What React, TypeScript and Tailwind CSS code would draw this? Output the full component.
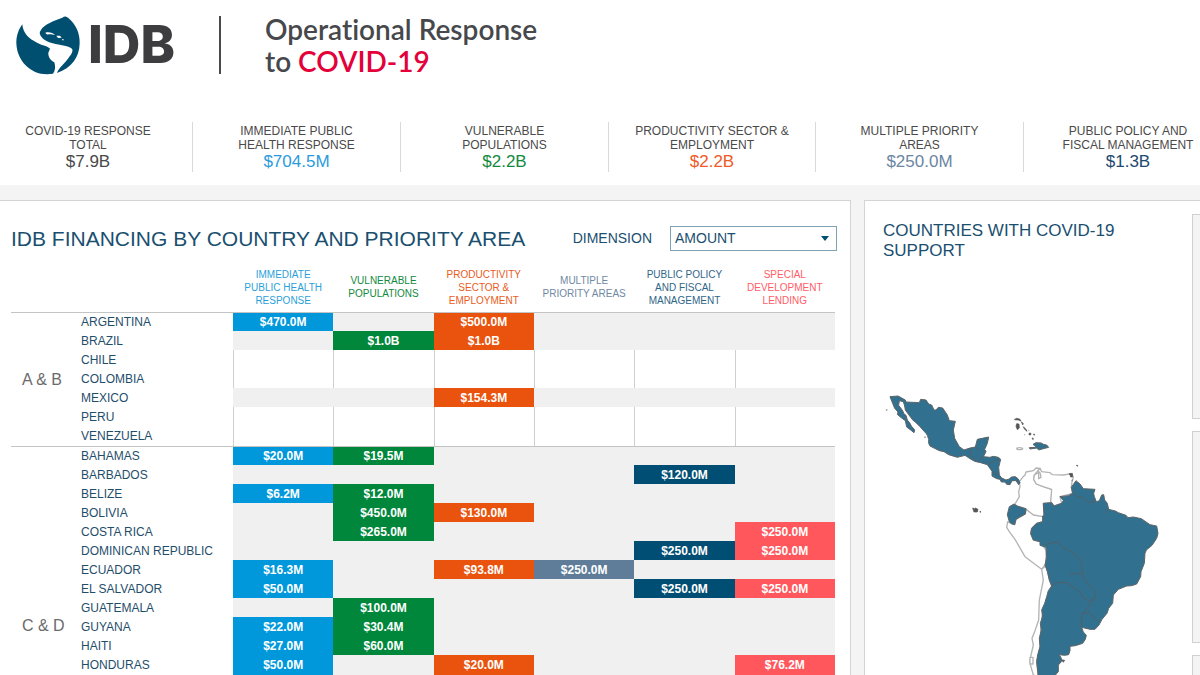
const totals = [
  { label: "COVID-19 RESPONSE\nTOTAL", value: "$7.9B", style: "pr-4 border-r text-[#4a4a4a]" },
  { label: "IMMEDIATE PUBLIC\nHEALTH RESPONSE", value: "$704.5M", style: "border-r text-[#2b9bdc]" },
  { label: "VULNERABLE\nPOPULATIONS", value: "$2.2B", style: "border-r text-[#128a3e]" },
  { label: "PRODUCTIVITY SECTOR &\nEMPLOYMENT", value: "$2.2B", style: "border-r text-[#f05a28]" },
  { label: "MULTIPLE PRIORITY\nAREAS", value: "$250.0M", style: "border-r text-[#6b86a3]" },
  { label: "PUBLIC POLICY AND\nFISCAL MANAGEMENT", value: "$1.3B", style: "pl-8 text-[#1d4a70]" },
];

const columns = [
  { name: "IMMEDIATE\nPUBLIC HEALTH\nRESPONSE", text: "text-[#2b9fd9]", fill: "bg-[#0098db]" },
  { name: "VULNERABLE\nPOPULATIONS", text: "text-[#128a3e]", fill: "bg-[#00873b]" },
  { name: "PRODUCTIVITY\nSECTOR &\nEMPLOYMENT", text: "text-[#ea5b1c]", fill: "bg-[#e9530e]" },
  { name: "MULTIPLE\nPRIORITY AREAS", text: "text-[#6f89a3]", fill: "bg-[#5f7d98]" },
  { name: "PUBLIC POLICY\nAND FISCAL\nMANAGEMENT", text: "text-[#2f6687]", fill: "bg-[#004e73]" },
  { name: "SPECIAL\nDEVELOPMENT\nLENDING", text: "text-[#ff5c66]", fill: "bg-[#ff575c]" },
];

// amounts are keyed by column index
type Row = { country: string; amounts: Record<number, string> };

const groups: { name: string; cell: string; rows: Row[] }[] = [
  {
    name: "A & B",
    cell: "align-middle",
    rows: [
      { country: "ARGENTINA", amounts: { 0: "$470.0M", 2: "$500.0M" } },
      { country: "BRAZIL", amounts: { 1: "$1.0B", 2: "$1.0B" } },
      { country: "CHILE", amounts: {} },
      { country: "COLOMBIA", amounts: {} },
      { country: "MEXICO", amounts: { 2: "$154.3M" } },
      { country: "PERU", amounts: {} },
      { country: "VENEZUELA", amounts: {} },
    ],
  },
  {
    name: "C & D",
    cell: "align-bottom pb-10",
    rows: [
      { country: "BAHAMAS", amounts: { 0: "$20.0M", 1: "$19.5M" } },
      { country: "BARBADOS", amounts: { 4: "$120.0M" } },
      { country: "BELIZE", amounts: { 0: "$6.2M", 1: "$12.0M" } },
      { country: "BOLIVIA", amounts: { 1: "$450.0M", 2: "$130.0M" } },
      { country: "COSTA RICA", amounts: { 1: "$265.0M", 5: "$250.0M" } },
      { country: "DOMINICAN REPUBLIC", amounts: { 4: "$250.0M", 5: "$250.0M" } },
      { country: "ECUADOR", amounts: { 0: "$16.3M", 2: "$93.8M", 3: "$250.0M" } },
      { country: "EL SALVADOR", amounts: { 0: "$50.0M", 4: "$250.0M", 5: "$250.0M" } },
      { country: "GUATEMALA", amounts: { 1: "$100.0M" } },
      { country: "GUYANA", amounts: { 0: "$22.0M", 1: "$30.4M" } },
      { country: "HAITI", amounts: { 0: "$27.0M", 1: "$60.0M" } },
      { country: "HONDURAS", amounts: { 0: "$50.0M", 2: "$20.0M", 5: "$76.2M" } },
    ],
  },
];

function Globe() {
  return (
    <svg className="w-16 h-[60px] shrink-0" viewBox="49 47 192 180" aria-hidden="true">
      <g fill="#004e70">
        <path d="M68 75C57 90 50 108 50 132C52 185 92 225 142 225L160 223C167 214 168 202 164 189C152 182 145 172 146 160L151 148C143 138 130 140 112 130C88 119 70 102 68 75Z" />
        <path d="M120 102C121 88 139 73 172 61L188 55Q198 47 206 56C229 76 241 101 240 132C239 175 216 206 172 221C178 205 192 196 206 177C211 168 220 162 218 150C209 139 190 139 168 134C144 129 125 121 120 102Z" />
      </g>
      <g fill="#fff">
        <path d="M137 100C147 96 161 101 166 107C158 107 154 104 148 105C143 106 139 104 137 100Z" />
        <path d="M170 109L181 109L186 115L175 116Z" />
        <path d="M187 120h5v3h-5z" />
      </g>
    </svg>
  );
}

function SupportMap() {
  return (
    <svg
      className="w-[320px] h-[295px] shrink-0"
      viewBox="0 0 960 885"
      role="img"
      aria-label="Map of Latin America and the Caribbean"
      strokeLinejoin="round"
    >
      {/* countries without support */}
      <g fill="#fff" stroke="#b4b4b4" strokeWidth="4">
        <path d="M448 305L458 292L465 285L468 276L490 272L498 264L510 265L493 285L491 298L499 312L520 320L545 328L545 345L542 368L520 370L522 405L520 425L500 413L486 403L468 388L440 378L435 372L448 350L446 335L450 320Z" />
        <path d="M510 265L515 275L540 278L547 284L580 285L605 281L610 292L606 306L604 322L608 340L570 350L575 370L552 378L542 365L545 328L520 320L499 312L491 298L493 285L506 277L506 296L513 292L511 280L504 272Z" />
        <path d="M468 388L490 405L520 410L518 425L500 430L485 445L482 455L490 480L510 485L528 510L528 550L515 568L465 530L435 478L418 455L410 442L413 425L424 431L434 434L438 418L466 402Z" />
        <path d="M515 568L520 600L512 640L508 660L506 720L495 752L486 775L490 795L482 830L480 850L490 885L505 890L500 845L510 800L512 750L518 690L535 650L545 618L538 600L530 555Z" />
        <ellipse cx="449" cy="206" rx="9" ry="3" />
        <path d="M480 832h9v20h-9z" />
      </g>
      {/* countries with support */}
      <g fill="#31718f" stroke="#5d6467" strokeWidth="3">
        <path d="M60 50L84 48L106 60L108 66L148 68L152 58L168 60L176 72L185 75L192 90L198 90L205 82L218 84L232 105L238 122L256 124L250 150L254 175L268 200L282 210L300 204L316 201L322 178L356 171L352 190L344 208L348 215L340 230L360 232L370 229L385 232L392 238L386 262L388 285L395 294L408 300L418 297L424 291L436 290L445 297L450 308L446 314L438 302L426 302L420 314L410 313L405 306L394 306L390 298L380 296L366 288L366 274L352 254L332 248L314 244L300 236L285 226L262 232L236 224L222 215L208 212L180 198L176 190L176 178L172 166L168 160L150 140L135 125L130 122L122 112L106 90L104 78L100 65L88 62L86 76L98 92L102 102L108 106L112 120L120 130L124 138L134 150L132 158L122 150L110 141L106 122L92 112L82 103L84 96L74 85Z" />
        <path d="M432 372L441 378L468 386L466 402L448 412L438 418L434 434L424 431L418 425L412 404L418 380Z" />
        <path d="M478 203L500 202L489 193L498 188L514 189L520 193L530 195L536 202L520 206L506 210L501 204L480 207Z" />
        <path d="M618 302L630 312L640 326L675 328L671 340L673 350L679 365L688 362L695 345L701 344L704 360L712 370L716 388L724 390L736 393L745 398L768 406L774 413L790 411L814 416L840 434L860 438L864 460L860 475L846 496L829 510L825 520L823 550L813 575L812 590L800 612L785 617L770 618L745 628L730 645L728 670L716 685L711 700L696 718L687 735L675 748L660 748L635 742L640 756L649 766L646 778L638 790L616 797L600 799L600 812L596 824L584 826L568 824L574 835L574 845L565 855L565 875L550 892L505 892L500 845L503 825L510 800L508 775L514 750L511 730L518 708L515 690L524 670L530 650L535 632L545 618L538 600L532 575L525 555L530 530L528 502L510 496L510 485L490 480L482 462L485 445L500 430L518 425L518 408L522 405L520 370L545 368L552 378L575 370L580 361L570 350L595 347L608 340L604 322Z" />
      </g>
      {/* inner borders */}
      <g fill="none" stroke="#516069" strokeWidth="3">
        <path d="M525 495L540 490L565 485L575 500L595 512L612 520L624 530L633 548L638 580L644 600L655 612L672 632L677 650L670 662L654 682L638 700L634 720L635 742" />
        <path d="M545 618L560 607L590 608L610 622L630 635L642 655L658 663L672 656M600 582L636 580M638 700L660 698L675 716L686 726" />
        <path d="M608 340L622 350L640 354L655 368L676 364M716 388L704 400" />
        <path d="M300 204L304 228L324 246M340 230L328 236M354 254L366 246L388 236M366 274L386 285M316 201L330 212" />
      </g>
      {/* small islands */}
      <g fill="#555" stroke="#555" strokeWidth="2">
        <path d="M433 119l6-4 10 2 4 6-8-3zM440 131l7 1 1 12-6 5-4-10zM454 125l6 6-2 4zM460 140l8 8 3 6-8-7zM477 160l5-1 1 5-6 1zM490 162l4 1-1 3zM486 174l4 1-1 4z" />
        <path d="M308 384l6 2 2-2 8 4-2 8-10 0-2-5zM330 393l3 3-3 1z" />
        <path d="M597 281l10-1 1 11-6 0-2-6zM619 256l4 0 0 3zM604 301l5-1M574 839l10 2-4 6z" />
      </g>
      <g fill="#b0b0b0">
        <circle cx="50" cy="90" r="3" />
        <circle cx="165" cy="172" r="3" />
        <circle cx="476" cy="151" r="2" />
        <circle cx="464" cy="164" r="2" />
      </g>
    </svg>
  );
}

function FinancingTable() {
  return (
    <table className="w-full table-fixed border-separate border-spacing-0 text-[12px] leading-[18px]">
      <colgroup>
        <col className="w-[70px]" />
        <col className="w-[152px]" />
        {columns.map((c) => (
          <col key={c.name} />
        ))}
      </colgroup>
      <thead>
        <tr>
          <td />
          <td />
          {columns.map((c) => (
            <th
              key={c.name}
              scope="col"
              className={`h-[50px] p-0 align-middle font-normal text-[10px] leading-[13px] whitespace-pre-line ${c.text}`}
            >
              {c.name}
            </th>
          ))}
        </tr>
      </thead>
      {groups.map((group) => (
        <tbody key={group.name}>
          {group.rows.map((row, i) => {
            const last = i === group.rows.length - 1;
            const line = i === 0 ? "border-t border-t-[#c4c4c4] h-[19px]" : last ? "h-5" : "h-[19px]";
            const empty = Object.keys(row.amounts).length === 0;
            return (
              <tr key={row.country}>
                {i === 0 && (
                  <th
                    scope="rowgroup"
                    rowSpan={group.rows.length}
                    className={`border-t border-t-[#c4c4c4] p-0 pl-[11px] text-left text-[16px] font-normal text-[#6b6b6b] ${group.cell}`}
                  >
                    {group.name}
                  </th>
                )}
                <th scope="row" className={`p-0 text-left font-normal whitespace-nowrap text-[#1f4e6b] ${line}`}>
                  {row.country}
                </th>
                {columns.map((c, n) => (
                  <td
                    key={c.name}
                    className={`p-0 text-center font-bold text-white ${line} ${
                      row.amounts[n] ? c.fill : empty ? "border-l border-l-[#cfcfcf]" : "bg-[#f0f0f0]"
                    }`}
                  >
                    {row.amounts[n]}
                  </td>
                ))}
              </tr>
            );
          })}
        </tbody>
      ))}
    </table>
  );
}

export default function App() {
  return (
    <div className="flex flex-col min-h-screen overflow-hidden bg-[#f4f4f4] font-['Liberation_Sans',Arial,sans-serif]">
      <div className="bg-white">
        <header className="flex items-center pl-4 pt-[13px] pb-[45px]">
          <Globe />
          <span className="ml-2 font-['Inter',sans-serif] text-[52px] leading-[60px] font-extrabold text-[#3d3d3f]">
            IDB
          </span>
          <div className="ml-11 w-[2px] h-[58px] bg-[#4a4a4a]" />
          <h1 className="ml-11 font-['Lato',sans-serif] text-[28px] leading-8 font-semibold [font-variant-ligatures:none] text-[#46484b]">
            Operational Response
            <br />
            to <span className="text-[#e4003a]">COVID-19</span>
          </h1>
        </header>

        <section className="grid grid-cols-[193fr_208fr_208fr_207fr_208fr_176fr] pb-[13px] text-center">
          {totals.map((t) => (
            <div key={t.label} className={`h-[50px] pt-[2px] border-[#d9d9d9] ${t.style}`}>
              <p className="text-[12px] leading-[14px] whitespace-pre-line text-[#4a4a4a]">{t.label}</p>
              <p className="text-[17px] leading-5">{t.value}</p>
            </div>
          ))}
        </section>
      </div>

      <main className="grid grow grid-cols-[851fr_336fr] gap-x-[13px] pt-[15px]">
        <section className="min-w-0 border-t border-r border-[#d4d4d4] bg-white pt-[25px] pl-[11px] pr-[13px]">
          <div className="flex items-center pb-[11px]">
            <h2 className="grow text-[21px] leading-[25px] whitespace-nowrap text-[#1a4f70]">
              IDB FINANCING BY COUNTRY AND PRIORITY AREA
            </h2>
            <label htmlFor="dimension" className="text-[14px] text-[#1a4f70]">
              DIMENSION
            </label>
            <div className="relative ml-[18px]">
              <select
                id="dimension"
                className="block w-[167px] h-[25px] appearance-none border border-[#7fa3b5] bg-white px-1 text-[14px] text-[#1a4f70]"
              >
                <option>AMOUNT</option>
              </select>
              <svg className="absolute right-2 top-[10px] w-2 h-[5px] pointer-events-none" viewBox="0 0 8 5" aria-hidden="true">
                <path d="M0 0h8L4 5z" fill="#004e70" />
              </svg>
            </div>
          </div>
          <div className="pr-[2px]">
            <FinancingTable />
          </div>
        </section>

        <section className="flex min-w-0 border-t border-l border-[#d4d4d4] bg-white">
          <div className="flex min-w-0 grow flex-col pl-[5px] pt-5">
            <h2 className="pl-[13px] text-[17px] leading-5 text-[#1a4f70]">
              COUNTRIES WITH COVID-19
              <br />
              SUPPORT
            </h2>
            <div className="mt-auto">
              <SupportMap />
            </div>
          </div>
          <div className="flex w-2 shrink-0 flex-col gap-3 pt-[13px]">
            <div className="h-[205px] border-y border-l border-[#d0d0d0] bg-[#f4f4f4]" />
            <div className="h-[212px] border-y border-l border-[#d0d0d0] bg-[#f4f4f4]" />
            <div className="grow border-t border-l border-[#d0d0d0] bg-[#f4f4f4]" />
          </div>
        </section>
      </main>
    </div>
  );
}
